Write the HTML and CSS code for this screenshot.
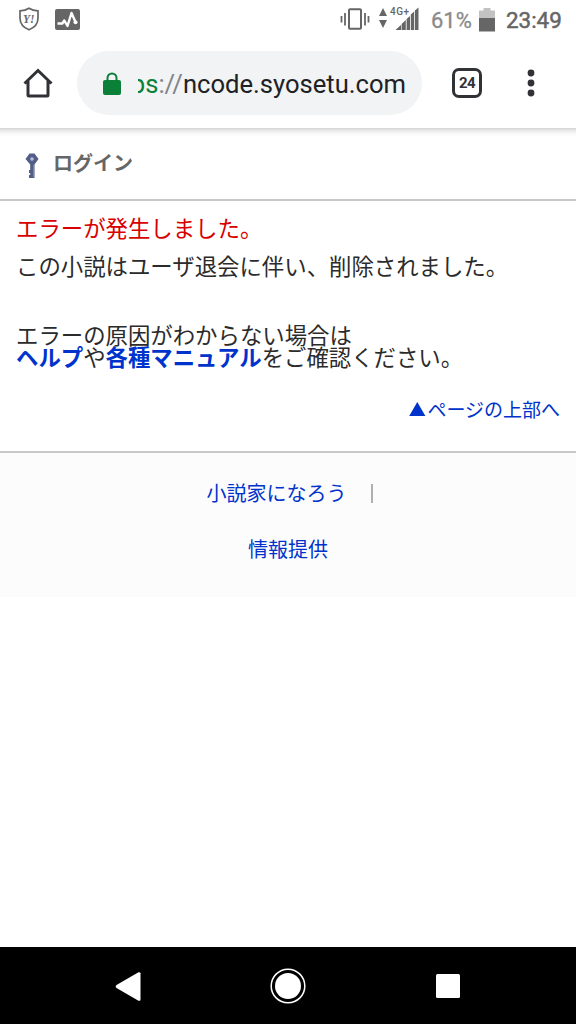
FILE: index.html
```html
<!DOCTYPE html>
<html lang="ja">
<head>
    <meta charset="UTF-8">
    <meta name="viewport" content="width=device-width, initial-scale=1.0">
    <title>エラー</title>
    <link rel="stylesheet" href="styles.css">
</head>
<body>
    <div class="status-bar">
        <svg class="icon-shield" width="22" height="24" viewBox="0 0 22 24">
            <path d="M11 1.2C8.300 3 5 3.800 2 3.900V11c0 6 4 9.800 9 11.800 5-2 9-5.800 9-11.800V3.900C17 3.800 13.700 3 11 1.200z" fill="none" stroke="#666" stroke-width="1.700"/>
            <text x="5" y="15.500" class="shield-text">Y!</text>
        </svg>
        <svg class="icon-activity" width="25" height="21" viewBox="0 0 25 21">
            <rect width="25" height="21" rx="2" fill="#666"/>
            <path d="M2.500 14.500h4.800l2-3 3.200 5.500L16.500 4l4 9" fill="none" stroke="#fff" stroke-width="2.400" stroke-linejoin="round"/>
            <circle cx="20.500" cy="13.300" r="2" fill="#fff"/>
        </svg>
        <div class="status-right">
            <svg width="30" height="22" viewBox="0 0 30 22">
                <rect x="9" y="1.200" width="12" height="19.600" rx="1" fill="none" stroke="#666" stroke-width="2"/>
                <path d="M1.500 8v6.500M5 5v12.500M25 5v12.500M28.500 8v6.500" stroke="#666" stroke-width="1.800"/>
            </svg>
            <svg class="icon-network" width="42" height="26" viewBox="0 0 42 26">
                <path d="M1 11l4-8 4 8zM1 15h8l-4 8z" fill="#666"/>
                <text x="12" y="10" class="network-text" textLength="19">4G+</text>
                <path d="M17.500 25l5.500-5v5zM23.600 19l4.200-4v10h-4.200zM28.600 14l3.400-3v14h-3.400zM32.800 9.500l3.300-3V25h-3.300zM36.900 5.500l3.600-3V25h-3.600z" fill="#666"/>
            </svg>
            <span class="battery-text">61%</span>
            <svg class="icon-battery" width="16" height="24" viewBox="0 0 16 24">
                <path d="M0 2.500h4.500V0h7v2.500H16V10H0z" fill="#c2c2c2"/>
                <path d="M0 10h16v13.500H0z" fill="#666"/>
            </svg>
            <span class="clock">23:49</span>
        </div>
    </div>

    <div class="toolbar">
        <svg class="icon-home" width="30" height="30" viewBox="0 0 30 30">
            <path d="M1.500 15.500L15 2.500l13.500 13M5 13v14a1 1 0 0 0 1 1h18a1 1 0 0 0 1-1V13" fill="none" stroke="#303236" stroke-width="3"/>
        </svg>
        <div class="address">
            <svg width="18" height="24" viewBox="0 0 18 24">
                <path d="M4.500 10V6a4.500 4.500 0 0 1 9 0v4" fill="none" stroke="#0b8039" stroke-width="2"/>
                <rect x="0" y="8" width="18" height="15" rx="2" fill="#0b8039"/>
            </svg>
            <div class="url"><span class="scheme">ps</span><span class="slashes">://</span>ncode.syosetu.com</div>
        </div>
        <div class="tab-count">24</div>
        <svg class="icon-menu" width="8" height="28" viewBox="0 0 8 28">
            <circle cx="4" cy="4" r="3.400" fill="#303236"/>
            <circle cx="4" cy="14" r="3.400" fill="#303236"/>
            <circle cx="4" cy="24" r="3.400" fill="#303236"/>
        </svg>
    </div>

    <div class="login">
        <svg width="14" height="27" viewBox="0 0 14 27">
            <path d="M4.500 1.500h5L13.500 7 9.500 12.500V26h-5.500v-3h1.200v-2H4v-3h1.200v-5.500L.500 7z" fill="#525e88"/>
            <path d="M8.800 13v12" stroke="#8c94ad" stroke-width="1"/>
            <circle cx="7" cy="7" r="1.800" fill="#b8c0d5"/>
        </svg>
        <span>ログイン</span>
    </div>

    <div class="contents">
        <p class="error">エラーが発生しました。</p>
        <p class="message">この小説はユーザ退会に伴い、削除されました。</p>
        <p class="help">エラーの原因がわからない場合は<br><a href="#">ヘルプ</a>や<a href="#">各種マニュアル</a>をご確認ください。</p>
        <p class="pagetop"><a href="#"><svg width="19" height="16" viewBox="0 0 19 16"><path d="M1.200 15L9.300 1l8.100 14z" fill="#03c"/></svg>ページの上部へ</a></p>
    </div>

    <div class="footer">
        <div class="footer-row"><a href="#">小説家になろう</a><span class="divider"></span></div>
        <div class="footer-row"><a href="#">情報提供</a></div>
    </div>

    <div class="nav-bar">
        <svg width="36" height="36" viewBox="0 0 36 36">
            <path d="M6.500 17L28.500 4.300a1.500 1.500 0 0 1 2 1v26.400a1.500 1.500 0 0 1-2 1L6.500 20a1.800 1.800 0 0 1 0-3z" fill="#fff"/>
        </svg>
        <svg width="36" height="36" viewBox="0 0 36 36">
            <circle cx="18" cy="18" r="16.800" fill="none" stroke="#fff" stroke-width="1.500"/>
            <circle cx="18" cy="18" r="13" fill="#fff"/>
        </svg>
        <svg width="36" height="36" viewBox="0 0 36 36">
            <rect x="6" y="6" width="24" height="24" rx="1.500" fill="#fff"/>
        </svg>
    </div>
</body>
</html>
```

FILE: styles.css
```css
* {
    box-sizing: border-box;
}

body {
    display: flex;
    flex-direction: column;
    height: 1024px;
    margin: 0;
    background-color: #fff;
    color: #2b2b2b;
    font-family: "Noto Sans CJK JP", sans-serif;
    overflow: hidden;
}

svg {
    display: block;
    flex-shrink: 0;
}

p {
    margin: 0;
}

a {
    color: #03c;
    text-decoration: none;
}

.status-bar {
    display: flex;
    align-items: center;
    height: 38px;
    padding: 0 13px 0 18px;
    color: #666;
    font-family: Roboto, sans-serif;
}

.icon-activity {
    margin-left: 15px;
}

.shield-text {
    font: italic bold 11.5px "Liberation Serif", serif;
    fill: #666;
}

.status-right {
    display: flex;
    align-items: center;
    margin-left: auto;
}

.icon-network {
    margin: -2px 0 0 8px;
}

.network-text {
    font: 500 10px Roboto, sans-serif;
    fill: #666;
}

.battery-text {
    width: 42px;
    margin: 2px 0 0 11px;
    color: #8a8a8a;
    font-size: 22px;
    -webkit-text-stroke: 0.3px #8a8a8a;
}

.icon-battery {
    margin: 1px 0 0 6px;
}

.clock {
    width: 57px;
    margin: 2px 0 0 11px;
    font-size: 22.4px;
    -webkit-text-stroke: 0.5px #666;
}

.toolbar {
    display: flex;
    align-items: center;
    height: 90px;
    padding: 0 41px 0 23px;
}

.address {
    display: flex;
    align-items: center;
    width: 345px;
    height: 64px;
    margin-left: 24px;
    padding: 1px 16px 0 26px;
    border-radius: 32px;
    background-color: #f1f3f4;
}

.url {
    display: flex;
    justify-content: flex-end;
    flex: 1;
    margin-left: 17px;
    padding-top: 1px;
    overflow: hidden;
    color: #202124;
    font-family: Roboto, sans-serif;
    font-size: 25.6px;
    line-height: 40px;
}

.scheme {
    color: #0b8039;
}

.slashes {
    color: #808488;
}

.tab-count {
    width: 30px;
    height: 30px;
    margin-left: 30px;
    border: 3px solid #303236;
    border-radius: 7px;
    color: #303236;
    font-family: Roboto, sans-serif;
    font-size: 15px;
    font-weight: 700;
    letter-spacing: -0.5px;
    line-height: 25px;
    text-align: center;
}

.icon-menu {
    margin-left: auto;
}

.login {
    display: flex;
    align-items: center;
    height: 73px;
    padding: 3px 25px 0;
    border-bottom: 2px solid #c8c8c8;
    background: linear-gradient(#d4d4d4, #ececec 3px, #fafafa 6px, #fff 9px);
    color: #666;
    font-size: 20px;
    font-weight: 700;
    line-height: 30px;
}

.login span {
    margin: -4px 0 0 14px;
}

.contents {
    height: 250px;
    padding: 15px 16px 0;
    font-size: 22.4px;
    line-height: 22.4px;
}

.error {
    color: #d80000;
}

.message {
    margin-top: 16px;
}

.help {
    margin-top: 46px;
}

.help a {
    font-weight: 700;
}

.pagetop {
    display: flex;
    justify-content: flex-end;
    margin-top: 30px;
    font-size: 19px;
}

.pagetop a {
    display: flex;
    align-items: center;
}

.footer {
    height: 146px;
    padding-top: 26px;
    border-top: 2px solid #c8c8c8;
    background-color: #fcfcfc;
    font-size: 20px;
    line-height: 28px;
}

.footer-row {
    display: flex;
    align-items: center;
    justify-content: center;
    margin-bottom: 28px;
}

.divider {
    width: 2px;
    height: 19px;
    margin: 0 -3px 0 24px;
    background-color: #b0b0b0;
}

.nav-bar {
    display: flex;
    align-items: center;
    justify-content: center;
    gap: 124px;
    height: 77px;
    margin-top: auto;
    background-color: #000;
}
```
